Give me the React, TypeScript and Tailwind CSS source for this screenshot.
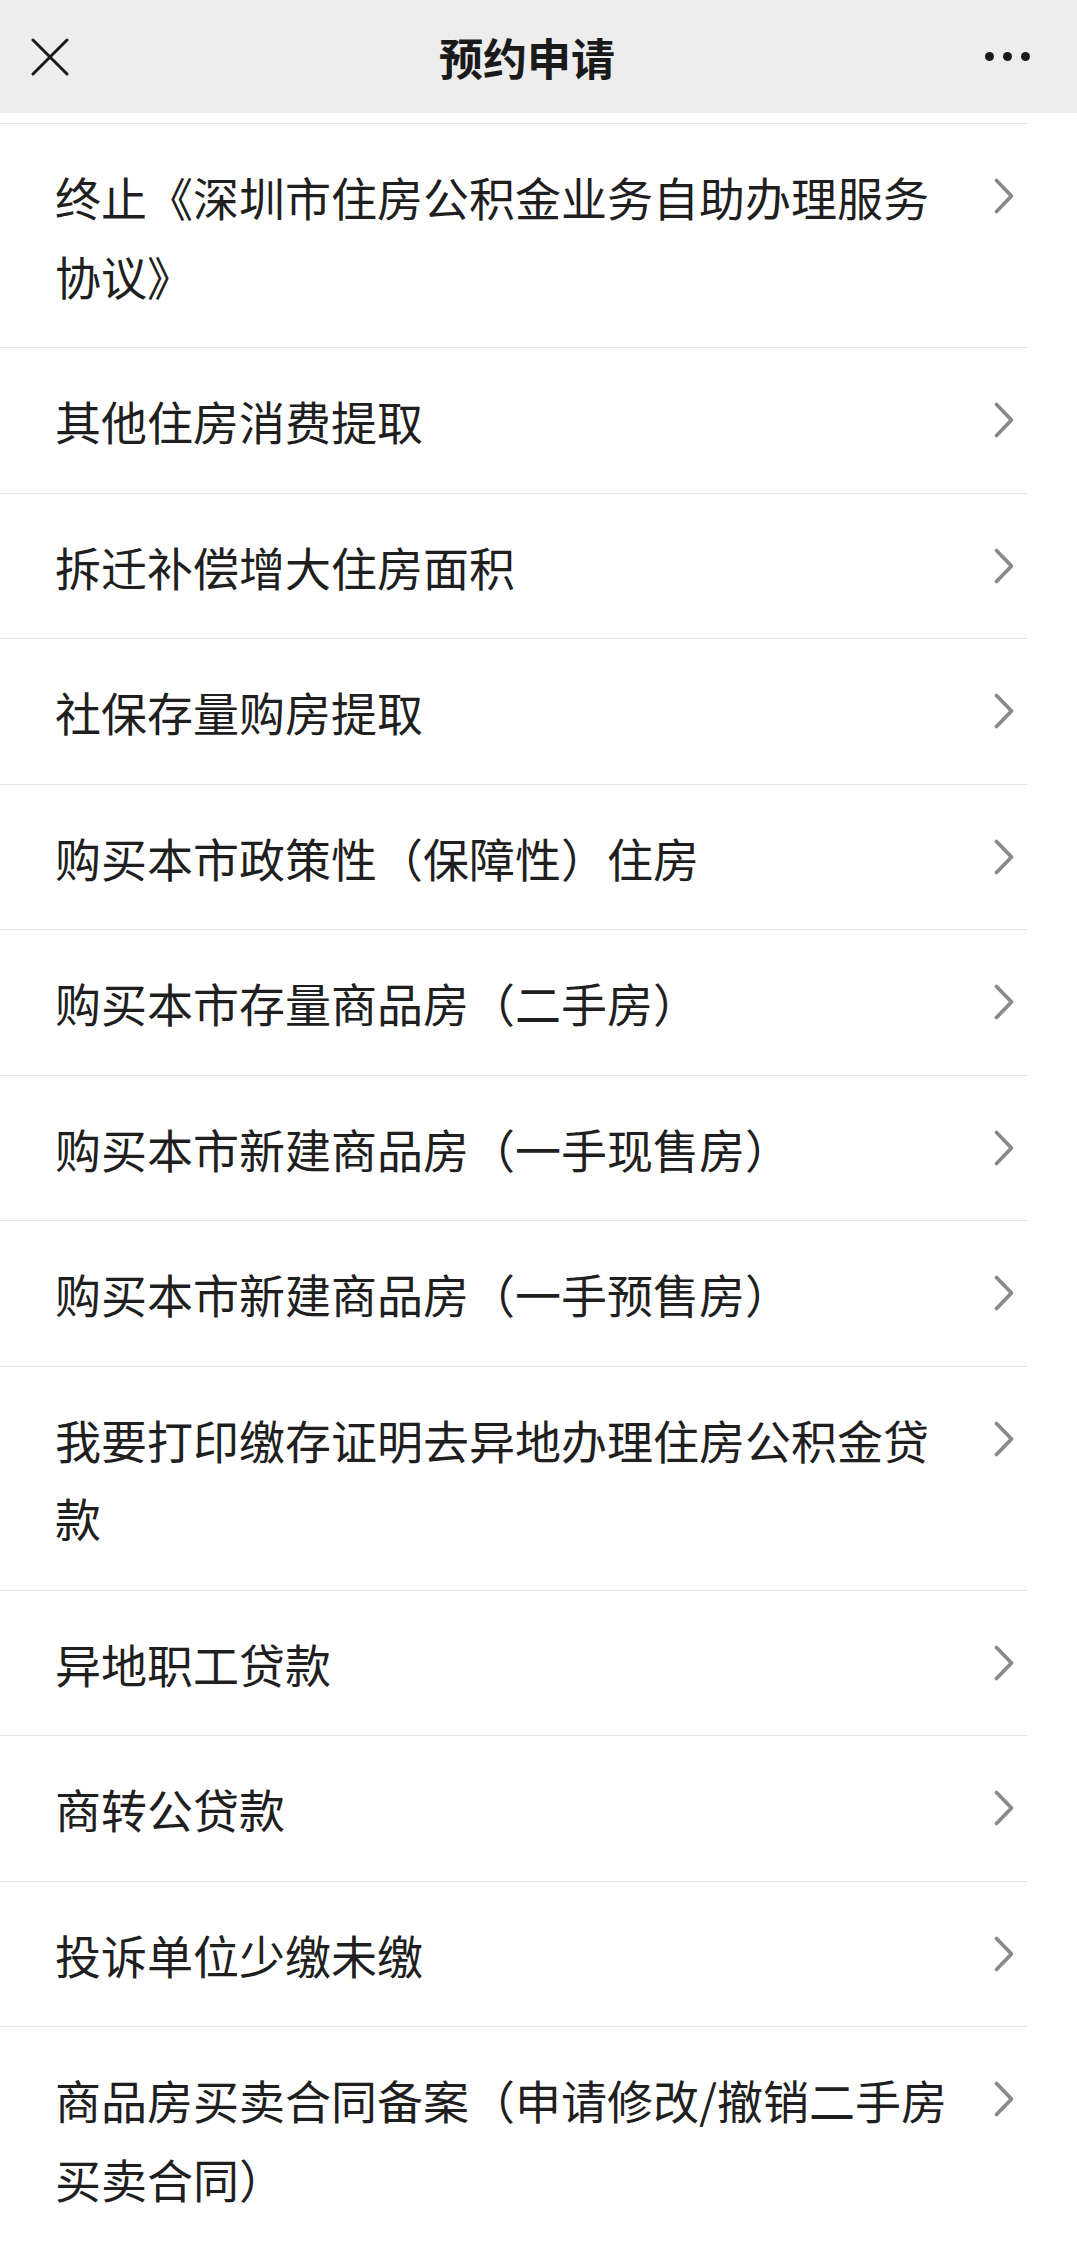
const items: string[] = [
  '终止《深圳市住房公积金业务自助办理服务协议》',
  '其他住房消费提取',
  '拆迁补偿增大住房面积',
  '社保存量购房提取',
  '购买本市政策性（保障性）住房',
  '购买本市存量商品房（二手房）',
  '购买本市新建商品房（一手现售房）',
  '购买本市新建商品房（一手预售房）',
  '我要打印缴存证明去异地办理住房公积金贷款',
  '异地职工贷款',
  '商转公贷款',
  '投诉单位少缴未缴',
  '商品房买卖合同备案（申请修改/撤销二手房买卖合同）',
];

const ChevronRight = () => (
  <svg width="22" height="38" viewBox="0 0 22 38" fill="none">
    <path d="M3.5 3.5 L18.5 19 L3.5 34.5" stroke="#8a8a8a" strokeWidth="3.8" strokeLinecap="round" strokeLinejoin="round" />
  </svg>
);

const Header = () => (
  <div className="h-[113px] bg-[#ededed] flex items-center justify-between px-[31px]">
    <svg width="38" height="38" viewBox="0 0 38 38" fill="none">
      <path d="M2 2 L36 36 M36 2 L2 36" stroke="#1a1a1a" strokeWidth="3" strokeLinecap="round" />
    </svg>
    <h1 className="text-[44px] font-semibold text-[#1a1a1a] leading-none">预约申请</h1>
    <div className="flex items-center gap-[9px] pr-[16px]">
      <span className="w-[9px] h-[9px] rounded-full bg-[#1a1a1a]" />
      <span className="w-[9px] h-[9px] rounded-full bg-[#1a1a1a]" />
      <span className="w-[9px] h-[9px] rounded-full bg-[#1a1a1a]" />
    </div>
  </div>
);

export default function App() {
  return (
    <div
      className="w-[1077px] min-h-[2245px] bg-white"
      style={{ fontFamily: '"Noto Sans CJK SC", "Noto Sans", sans-serif' }}
    >
      <Header />
      <div className="pt-[10px]">
        <div className="w-[1027px] border-t border-[#e6e6e6]">
          {items.map((label, i) => (
            <div
              key={i}
              className={
                i === items.length - 1
                  ? 'flex items-start pl-[55px] py-[33px]'
                  : 'flex items-start pl-[55px] py-[33px] border-b border-[#e6e6e6]'
              }
            >
              <div className="flex-1 text-[46px] leading-[78.5px] text-[#1f1f1f]">{label}</div>
              <div className="ml-[38px] mr-[12px] h-[78px] flex items-center">
                <ChevronRight />
              </div>
            </div>
          ))}
        </div>
      </div>
    </div>
  );
}
